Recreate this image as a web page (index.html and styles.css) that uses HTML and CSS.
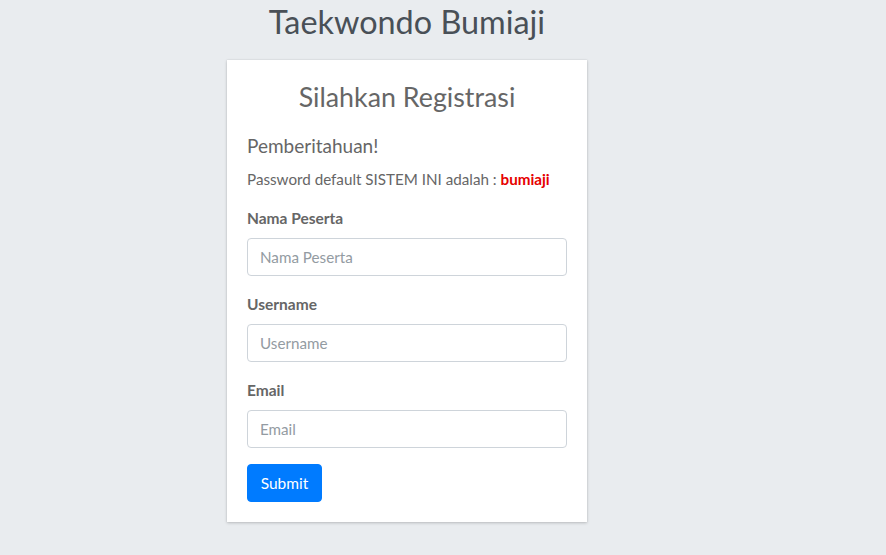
FILE: index.html
```html
<!DOCTYPE html>
<html lang="id">
<head>
<meta charset="utf-8">
<title>Taekwondo Bumiaji</title>
<link rel="stylesheet" href="styles.css">
</head>
<body>
<div class="login-box">
  <div class="login-logo">Taekwondo Bumiaji</div>
  <div class="card">
    <div class="card-body">
      <h3 class="card-title">Silahkan Registrasi</h3>
      <h5 class="notice-title">Pemberitahuan!</h5>
      <p class="notice">Password default SISTEM INI adalah : <b class="danger">bumiaji</b></p>
      <form>
        <div class="form-group">
          <label class="label">Nama Peserta</label>
          <input class="input" type="text" placeholder="Nama Peserta">
        </div>
        <div class="form-group">
          <label class="label">Username</label>
          <input class="input" type="text" placeholder="Username">
        </div>
        <div class="form-group">
          <label class="label">Email</label>
          <input class="input" type="email" placeholder="Email">
        </div>
        <button class="btn" type="button">Submit</button>
      </form>
    </div>
  </div>
</div>
</body>
</html>
```

FILE: styles.css
```css
* { box-sizing: border-box; }
html, body { margin: 0; padding: 0; }
body {
  background: #e9ecef;
  font-family: "Lato", "Liberation Sans", sans-serif;
  font-size: 15.2px;
  line-height: 1.5;
  color: #666;
  width: 886px;
  height: 555px;
  overflow: hidden;
}
.login-box {
  width: 360px;
  margin-left: 227px;
  padding-top: 1px;
}
.login-logo {
  font-size: 32.4px;
  font-weight: 400;
  line-height: 42px;
  height: 42px;
  text-align: center;
  color: #495057;
  margin-bottom: 17px;
}
.card {
  background: #fff;
  box-shadow: 0 0 1px rgba(0,0,0,.125), 0 1px 3px rgba(0,0,0,.2);
}
.card-body { padding: 20px; }
.card-title {
  margin: 0 0 20px;
  font-size: 26.8px;
  font-weight: 400;
  line-height: 34px;
  text-align: center;
}
.notice-title {
  margin: 0 0 9px;
  font-size: 19px;
  font-weight: 400;
  line-height: 24px;
}
.notice { margin: 0 0 15px; line-height: 24px; }
.danger { color: #e60000; font-weight: 700; }
.form-group { margin-bottom: 16px; }
.label {
  display: block;
  font-weight: 700;
  font-size: 15.5px;
  line-height: 24px;
  margin-bottom: 8px;
}
.input {
  display: block;
  width: 100%;
  height: 38px;
  padding: 6px 12px;
  border: 1px solid #ced4da;
  border-radius: 4px;
  font-family: inherit;
  font-size: 15.2px;
  color: #495057;
  background: #fff;
}
.input::placeholder { color: #939ba2; }
.btn {
  display: block;
  width: 75px;
  height: 38px;
  padding: 6px 0;
  border: 1px solid #007bff;
  border-radius: 4px;
  background: #007bff;
  color: #fff;
  font-family: inherit;
  font-size: 15.5px;
  line-height: 24px;
  text-align: center;
}
```
